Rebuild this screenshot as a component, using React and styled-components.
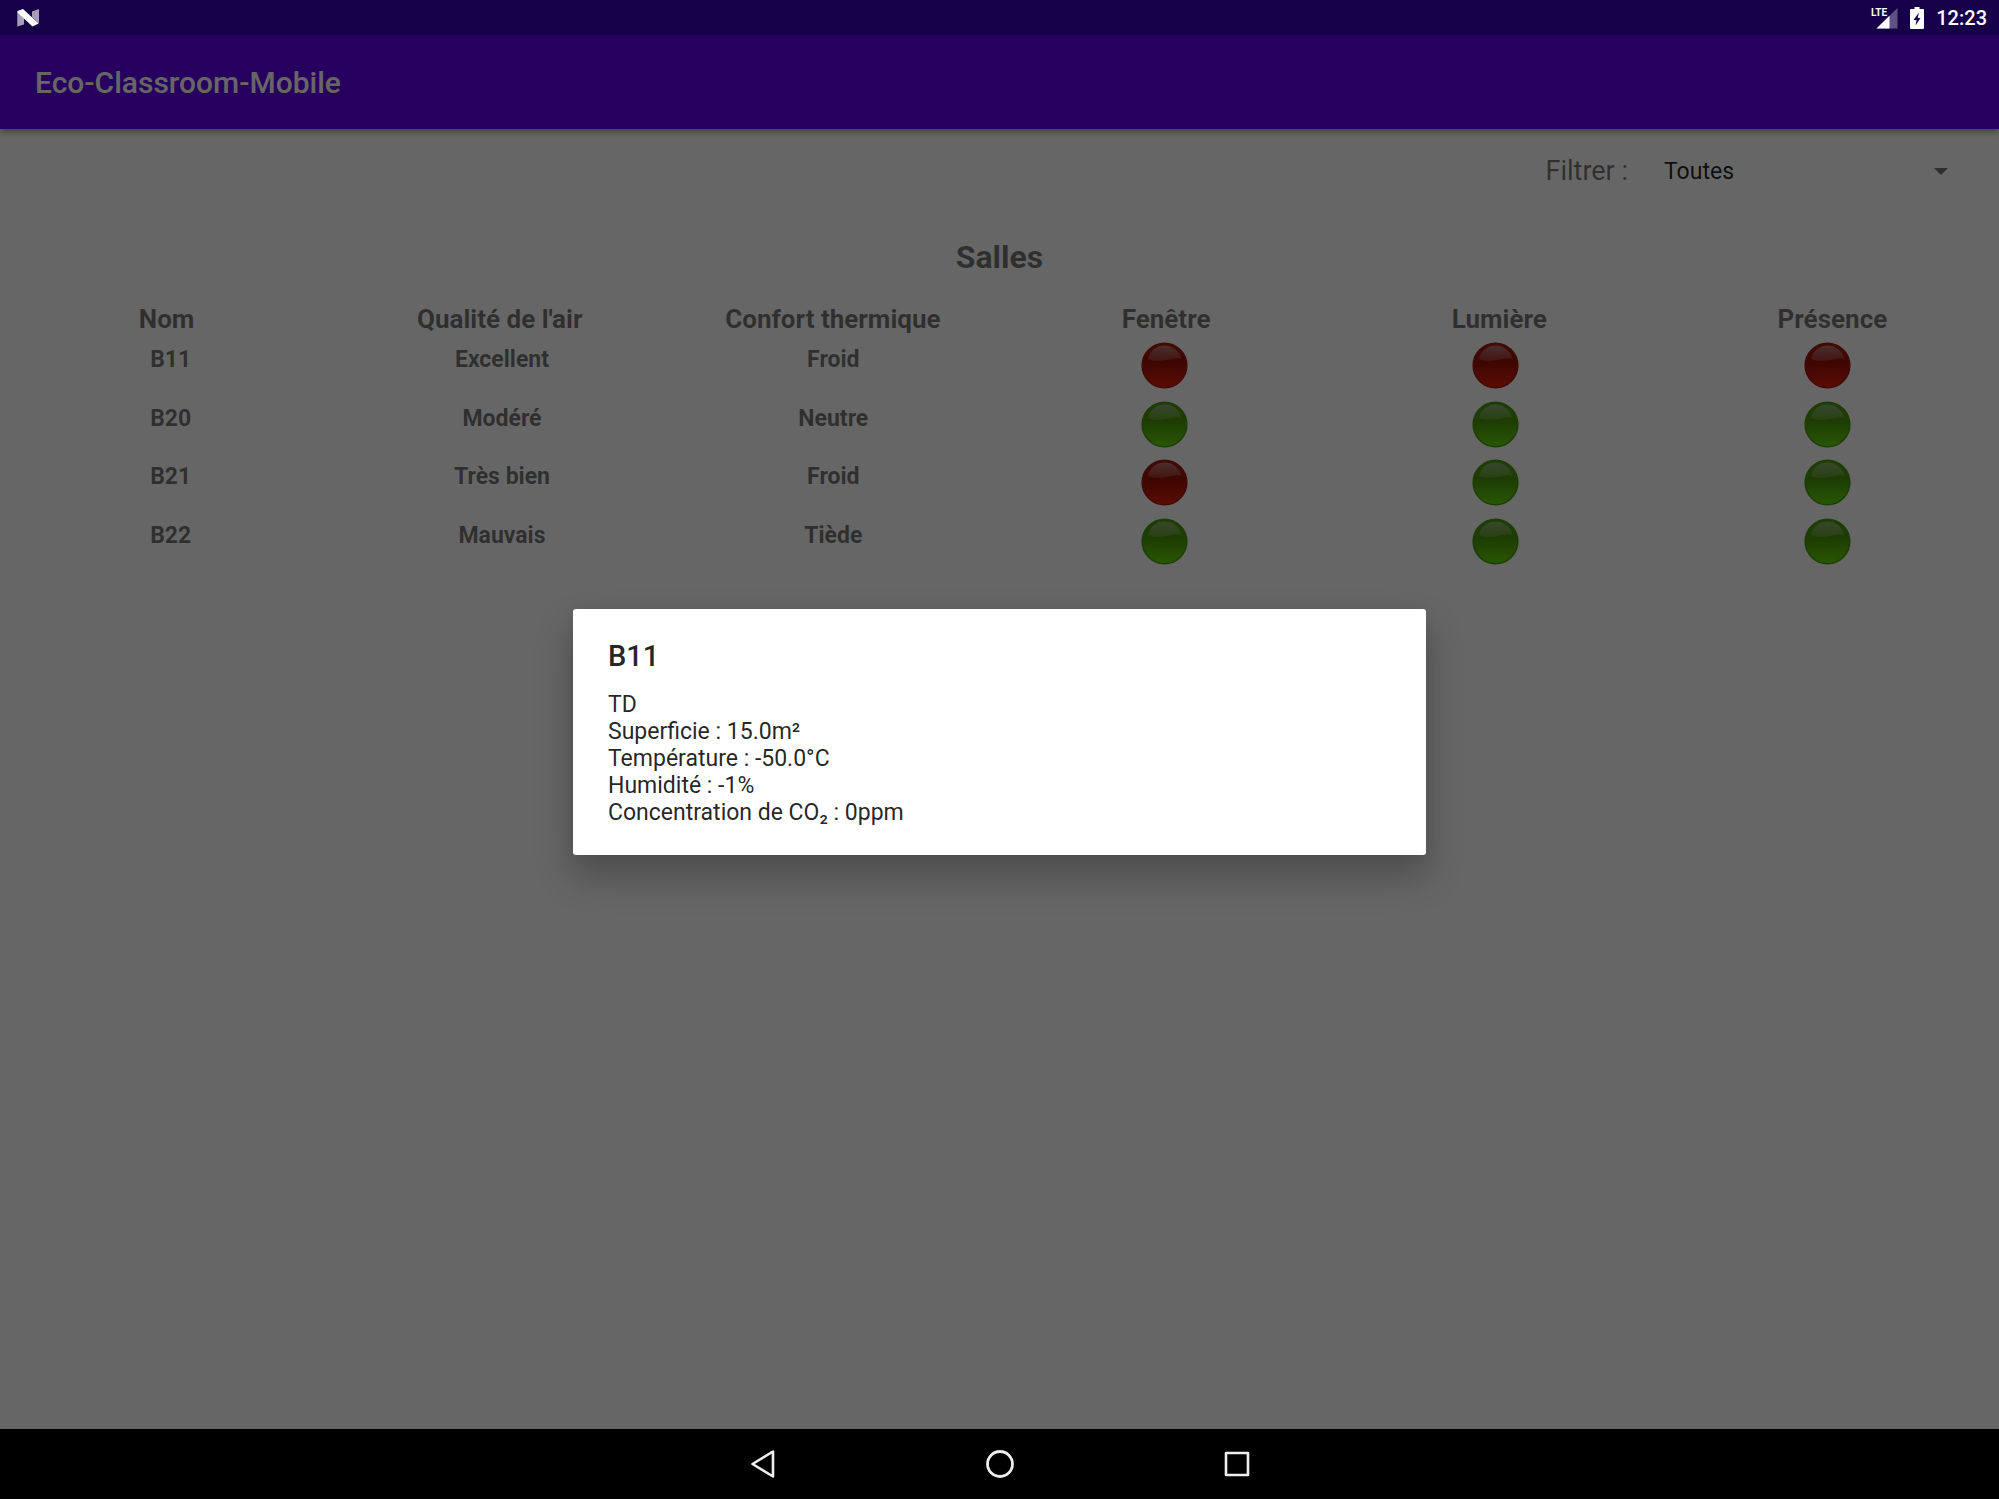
import React from "react";
import styled, { createGlobalStyle } from "styled-components";

const GlobalStyle = createGlobalStyle`
  *, *::before, *::after { box-sizing: border-box; }
  body { margin: 0; background: #fff; font-family: Roboto, "Noto Sans", sans-serif; }
`;

const Screen = styled.div`
  display: grid;
  grid-template-rows: 35px 1fr 70px;
  min-height: calc(100vh - 1px);
`;

const StatusBar = styled.header`
  display: flex;
  align-items: center;
  justify-content: space-between;
  padding: 0 12px 0 17px;
  background: #160048;
  color: #fff;
`;

const StatusIcons = styled.div`
  display: flex;
  align-items: center;
  gap: 12px;
`;

const Clock = styled.time`
  padding-top: 2px;
  font-size: 20px;
  font-weight: 500;
  line-height: 33px;
`;

const Window = styled.div`
  position: relative;
  display: flex;
  flex-direction: column;
  background: #fff;
`;

const AppBar = styled.div`
  display: flex;
  align-items: center;
  height: 94px;
  padding: 2px 35px 0;
  background: #6200ee;
  box-shadow: 0 3px 6px rgba(0, 0, 0, 0.35);
`;

const AppTitle = styled.h1`
  margin: 0;
  color: #fff;
  font-size: 30px;
  font-weight: 500;
  line-height: 34px;
`;

const Content = styled.main`
  display: flex;
  flex-direction: column;
  color: rgba(0, 0, 0, 0.54);
`;

const FilterRow = styled.div`
  display: flex;
  align-items: center;
  justify-content: flex-end;
  gap: 36px;
  padding: 24px 35px 0;
`;

const FilterLabel = styled.label`
  font-size: 27px;
  line-height: 36px;
`;

const Spinner = styled.div`
  position: relative;
  width: 300px;
`;

const SpinnerSelect = styled.select`
  display: block;
  width: 100%;
  height: 35px;
  padding: 0;
  border: 0;
  appearance: none;
  background: transparent;
  color: rgba(0, 0, 0, 0.87);
  font: 400 23px/27px Roboto, "Noto Sans", sans-serif;
`;

const SpinnerArrow = styled.svg`
  position: absolute;
  top: 14px;
  right: 16px;
  pointer-events: none;
`;

const SectionTitle = styled.h2`
  margin: 49px 0 0;
  font-size: 32px;
  font-weight: 700;
  line-height: 38px;
  text-align: center;
`;

const RoomTable = styled.table`
  display: block;
  margin-top: 28px;
  font-weight: 700;
  text-align: center;
`;

const TableHead = styled.thead`
  display: block;
`;

const TableBody = styled.tbody`
  display: grid;
  grid-auto-rows: 1fr;
  height: 234px;
  margin-top: 7px;
  padding: 0 6px 0 5px;
`;

const TableRow = styled.tr`
  display: grid;
  grid-template-columns: repeat(6, 1fr);
`;

const HeadCell = styled.th`
  padding: 0;
  font-size: 26px;
  line-height: 31px;
`;

const Cell = styled.td`
  padding: 0;
  font-size: 23px;
  line-height: 36px;
`;

const Ball = styled.svg`
  display: block;
  margin: 0 auto;
`;

const Scrim = styled.div`
  position: absolute;
  inset: 0;
  display: flex;
  align-items: center;
  justify-content: center;
  background: rgba(0, 0, 0, 0.6);
`;

const Dialog = styled.section`
  width: 853px;
  max-width: 90%;
  padding: 29px 35px;
  border-radius: 3px;
  background: #fff;
  color: rgba(0, 0, 0, 0.87);
  box-shadow: 0 20px 36px 2px rgba(0, 0, 0, 0.24), 0 0 12px rgba(0, 0, 0, 0.06);
`;

const DialogTitle = styled.h3`
  margin: 0 0 17px;
  font-size: 29px;
  font-weight: 500;
  line-height: 36px;
`;

const DialogLine = styled.p`
  margin: 0;
  font-size: 23px;
  line-height: 27px;
`;

const NavBar = styled.nav`
  display: flex;
  justify-content: center;
  background: #000;
`;

const NavButton = styled.button`
  display: flex;
  align-items: center;
  justify-content: center;
  width: 237px;
  padding: 0;
  border: 0;
  background: transparent;
`;

const columns = ["Nom", "Qualité de l'air", "Confort thermique", "Fenêtre", "Lumière", "Présence"];

const rooms = [
  { name: "B11", air: "Excellent", comfort: "Froid", states: [false, false, false] },
  { name: "B20", air: "Modéré", comfort: "Neutre", states: [true, true, true] },
  { name: "B21", air: "Très bien", comfort: "Froid", states: [false, true, true] },
  { name: "B22", air: "Mauvais", comfort: "Tiède", states: [true, true, true] },
];

const details = [
  "TD",
  "Superficie : 15.0m²",
  "Température : -50.0°C",
  "Humidité : -1%",
  "Concentration de CO₂ : 0ppm",
];

const HiddenDefs = styled.svg`
  position: absolute;
`;

function BallDefs() {
  return (
    <HiddenDefs width="0" height="0" aria-hidden="true">
      <defs>
        <linearGradient id="ball-on" x1="0" y1="0" x2="0" y2="1">
          <stop offset="0" stopColor="#4f9a14" />
          <stop offset="0.42" stopColor="#4a9708" />
          <stop offset="1" stopColor="#66da0c" />
        </linearGradient>
        <linearGradient id="ball-off" x1="0" y1="0" x2="0" y2="1">
          <stop offset="0" stopColor="#a81c10" />
          <stop offset="0.42" stopColor="#9c1004" />
          <stop offset="1" stopColor="#e0200e" />
        </linearGradient>
        <linearGradient id="ball-shine" x1="0" y1="0" x2="0" y2="1">
          <stop offset="0" stopColor="#ccc" stopOpacity="0.5" />
          <stop offset="1" stopColor="#ccc" stopOpacity="0.2" />
        </linearGradient>
      </defs>
    </HiddenDefs>
  );
}

function StateBall({ on }) {
  return (
    <Ball width="47" height="47" viewBox="0 0 47 47" role="img" aria-label={on ? "Oui" : "Non"}>
      <circle cx="23.5" cy="23.5" r="22.3" fill={on ? "url(#ball-on)" : "url(#ball-off)"} stroke={on ? "#4a9a0a" : "#a01a10"} strokeWidth="1.6" />
      <path d="M7 17C9 8 16 3.500 23.500 3.500S38 8 40.500 17C36 15 30 17.500 23 18.500S10 19 7 17Z" fill="url(#ball-shine)" />
    </Ball>
  );
}

export default function App() {
  return (
    <Screen>
      <GlobalStyle />
      <BallDefs />
      <StatusBar>
        <svg width="22" height="18" viewBox="0 0 22 18" aria-hidden="true">
          <path d="M0.300 2.500 7 9v6.500L0.300 17.500ZM15 2.500 22 0v14.500L15 8Z" fill="#fff" opacity="0.62" />
          <path d="M0.500 2 6 0 21.700 14.500 15.500 17.500 0.500 3.500Z" fill="#fff" />
        </svg>
        <StatusIcons>
          <svg width="27" height="22" viewBox="0 0 27 22" aria-hidden="true">
            <path d="M5.500 21.500H26.500V1Z" fill="#fff" opacity="0.32" />
            <path d="M5.500 21.500H18.500V8.800Z" fill="#fff" />
            <text x="0" y="9" fill="#fff" fontFamily="Roboto, sans-serif" fontSize="10" fontWeight="700">LTE</text>
          </svg>
          <svg width="14" height="22" viewBox="0 0 14 22" aria-hidden="true">
            <path d="M4.500 0h5v2H13a1 1 0 0 1 1 1v18a1 1 0 0 1-1 1H1a1 1 0 0 1-1-1V3a1 1 0 0 1 1-1h3.500Z" fill="#fff" />
            <path d="M9 5.500 3.500 13H6.500L5.500 18.500 10.500 11H7.700Z" fill="#160048" />
          </svg>
          <Clock>12:23</Clock>
        </StatusIcons>
      </StatusBar>

      <Window>
        <AppBar>
          <AppTitle>Eco-Classroom-Mobile</AppTitle>
        </AppBar>
        <Content>
          <FilterRow>
            <FilterLabel htmlFor="filter">Filtrer :</FilterLabel>
            <Spinner>
              <SpinnerSelect id="filter" defaultValue="Toutes">
                <option>Toutes</option>
              </SpinnerSelect>
              <SpinnerArrow width="14" height="7" viewBox="0 0 14 7" aria-hidden="true">
                <path d="M0 0H14L7 7Z" fill="rgba(0, 0, 0, 0.54)" />
              </SpinnerArrow>
            </Spinner>
          </FilterRow>
          <SectionTitle>Salles</SectionTitle>
          <RoomTable>
            <TableHead>
              <TableRow>
                {columns.map((column) => (
                  <HeadCell key={column} scope="col">{column}</HeadCell>
                ))}
              </TableRow>
            </TableHead>
            <TableBody>
              {rooms.map((room) => (
                <TableRow key={room.name}>
                  <Cell>{room.name}</Cell>
                  <Cell>{room.air}</Cell>
                  <Cell>{room.comfort}</Cell>
                  {room.states.map((on, index) => (
                    <Cell key={columns[index + 3]}>
                      <StateBall on={on} />
                    </Cell>
                  ))}
                </TableRow>
              ))}
            </TableBody>
          </RoomTable>
        </Content>
        <Scrim>
          <Dialog role="dialog" aria-modal="true" aria-labelledby="dialog-title">
            <DialogTitle id="dialog-title">B11</DialogTitle>
            {details.map((line) => (
              <DialogLine key={line}>{line}</DialogLine>
            ))}
          </Dialog>
        </Scrim>
      </Window>

      <NavBar>
        <NavButton aria-label="Retour">
          <svg width="30" height="30" viewBox="0 0 30 30" fill="none" stroke="#eee" strokeWidth="2.600" strokeLinejoin="round">
            <path d="M25 2.500V27.500L4.500 15Z" />
          </svg>
        </NavButton>
        <NavButton aria-label="Accueil">
          <svg width="30" height="30" viewBox="0 0 30 30" fill="none" stroke="#eee" strokeWidth="2.800">
            <circle cx="15" cy="15" r="12.500" />
          </svg>
        </NavButton>
        <NavButton aria-label="Applications récentes">
          <svg width="30" height="30" viewBox="0 0 30 30" fill="none" stroke="#eee" strokeWidth="2.600" strokeLinejoin="round">
            <rect x="4" y="4" width="22" height="22" />
          </svg>
        </NavButton>
      </NavBar>
    </Screen>
  );
}
